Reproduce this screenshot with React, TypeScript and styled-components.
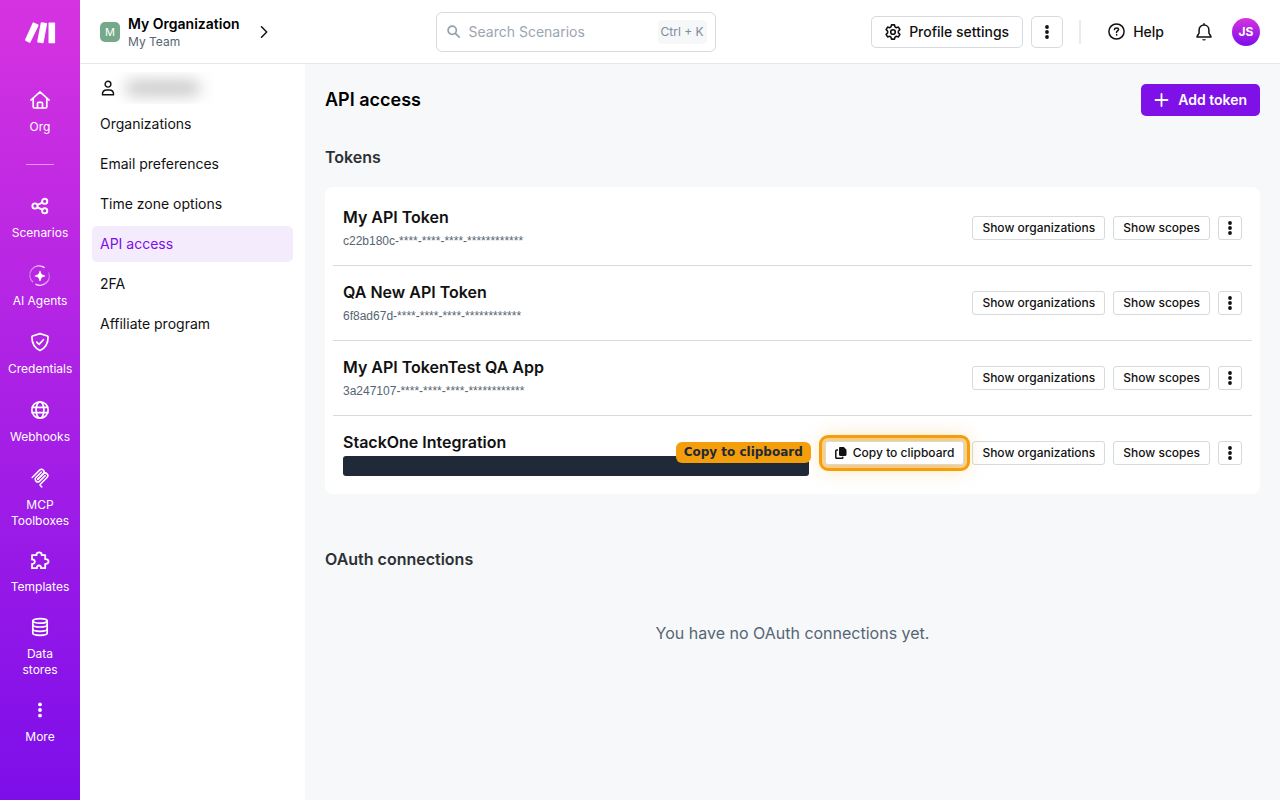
import React from 'react';
import styled, { createGlobalStyle } from 'styled-components';

const GlobalStyle = createGlobalStyle`
  *, *::before, *::after { box-sizing: border-box; }
  body {
    margin: 0;
    font-family: Inter, 'Liberation Sans', sans-serif;
    font-size: 14px;
    line-height: 20px;
    color: #111111;
    background: #f7f8fa;
  }
  button, input { font: inherit; color: inherit; }
  button { cursor: pointer; }
  a { color: inherit; text-decoration: none; }
  h1, h2, h3, p, ul { margin: 0; padding: 0; }
  ul { list-style: none; }
  svg { display: block; flex-shrink: 0; }
`;

const Shell = styled.div`
  display: flex;
  min-height: 100vh;
`;

const Rail = styled.nav`
  width: 80px;
  flex-shrink: 0;
  display: flex;
  flex-direction: column;
  align-items: center;
  padding-top: 22px;
  color: #ffffff;
  background: linear-gradient(180deg, #d633e0 0%, #7d0eea 100%);
`;

const LogoLink = styled.a`
  display: block;
  margin-bottom: 47px;
`;

const RailDivider = styled.hr`
  width: 28px;
  height: 1px;
  margin: 29px 0 32px;
  border: 0;
  background: rgba(255, 255, 255, 0.5);
`;

const RailList = styled.ul<{ $gap?: number }>`
  width: 100%;
  display: flex;
  flex-direction: column;
  gap: ${(p) => p.$gap ?? 24}px;

  & + & { margin-top: 22px; }
`;

const RailLink = styled.a`
  display: flex;
  flex-direction: column;
  align-items: center;
  gap: 10px;
  padding: 0 4px;
  font-size: 12px;
  line-height: 16px;
  text-align: center;

  svg { width: 20px; height: 18px; overflow: visible; }
`;

const RailLabel = styled.span`
  max-width: 64px;
`;

const Page = styled.div`
  flex: 1;
  min-width: 0;
  display: flex;
  flex-direction: column;
`;

const Header = styled.header`
  height: 64px;
  display: flex;
  align-items: center;
  justify-content: space-between;
  padding: 0 20px;
  background: #ffffff;
  border-bottom: 1px solid #e6e9ec;
`;

const OrgSwitch = styled.button`
  width: 180px;
  display: flex;
  align-items: center;
  gap: 8px;
  padding: 0 12px 0 0;
  border: 0;
  background: none;
  text-align: left;
`;

const OrgBadge = styled.span`
  width: 20px;
  height: 20px;
  flex-shrink: 0;
  border-radius: 5px;
  background: #76a98a;
  color: #ffffff;
  font-size: 11px;
  line-height: 20px;
  text-align: center;
`;

const OrgText = styled.span`
  flex: 1;
  display: flex;
  flex-direction: column;
  white-space: nowrap;
`;

const OrgName = styled.span`
  font-size: 14px;
  line-height: 20px;
  font-weight: 600;
  color: #000000;
`;

const TeamName = styled.span`
  font-size: 12px;
  line-height: 16px;
  color: #566573;
`;

const SearchBox = styled.label`
  width: 280px;
  height: 40px;
  display: flex;
  align-items: center;
  gap: 9px;
  padding: 0 8px 0 10px;
  border: 1px solid #d5dade;
  border-radius: 6px;
  background: #ffffff;
  color: #94a1ad;
`;

const SearchInput = styled.input`
  flex: 1;
  min-width: 0;
  padding: 0;
  border: 0;
  outline: 0;
  background: none;

  &::placeholder { color: #9aa6b1; opacity: 1; }
`;

const Shortcut = styled.kbd`
  padding: 0 3px;
  border-radius: 4px;
  background: #f5f7f9;
  color: #7d8b99;
  font-family: inherit;
  font-size: 12px;
  line-height: 24px;
`;

const HeaderActions = styled.div`
  display: flex;
  align-items: center;
`;

const OutlineButton = styled.button<{ $square?: boolean; $small?: boolean }>`
  height: ${(p) => (p.$small ? 24 : 32)}px;
  width: ${(p) => (p.$square ? (p.$small ? '24px' : '32px') : 'auto')};
  display: inline-flex;
  align-items: center;
  justify-content: center;
  gap: ${(p) => (p.$small ? 6 : 8)}px;
  padding: 0 ${(p) => (p.$square ? 0 : p.$small ? 9 : 13)}px;
  border: 1px solid #d5dade;
  border-radius: ${(p) => (p.$small ? 3 : 5)}px;
  background: #ffffff;
  color: #111111;
  font-size: ${(p) => (p.$small ? 12 : 14)}px;
  font-weight: 500;
  white-space: nowrap;
`;

const MoreButton = styled(OutlineButton)`
  margin-left: 8px;
`;

const HeaderDivider = styled.span`
  width: 2px;
  height: 24px;
  margin: 0 27px 0 16px;
  background: #e8ecef;
`;

const HelpLink = styled.a`
  display: flex;
  align-items: center;
  gap: 8px;
  font-weight: 500;
`;

const BellButton = styled.button`
  margin: 0 20px 0 32px;
  padding: 0;
  border: 0;
  background: none;
`;

const UserAvatar = styled.button`
  width: 28px;
  height: 28px;
  padding: 0;
  border: 0;
  border-radius: 50%;
  background: linear-gradient(180deg, #d633e0, #7d0eea);
  color: #ffffff;
  font-size: 12px;
  font-weight: 700;
`;

const Body = styled.div`
  flex: 1;
  display: flex;
`;

const Sidebar = styled.aside`
  width: 225px;
  flex-shrink: 0;
  padding: 8px 12px;
  background: #ffffff;
`;

const Account = styled.div`
  height: 32px;
  display: flex;
  align-items: center;
  gap: 8px;
  padding: 0 8px;
  overflow: hidden;
`;

const HiddenName = styled.span`
  width: 74px;
  height: 12px;
  margin-left: 2px;
  border-radius: 6px;
  background: #b8b8b8;
  filter: blur(8px);
`;

const Menu = styled.ul`
  display: flex;
  flex-direction: column;
  gap: 4px;
  margin-top: 2px;
`;

const MenuLink = styled.a<{ $active?: boolean }>`
  display: block;
  padding: 0 8px;
  border-radius: 5px;
  line-height: 36px;
  color: ${(p) => (p.$active ? '#7d0eea' : '#111111')};
  background: ${(p) => (p.$active ? '#f4ebfc' : 'transparent')};
`;

const Main = styled.main`
  flex: 1;
  min-width: 0;
  padding: 20px;
`;

const TitleRow = styled.div`
  display: flex;
  align-items: center;
  justify-content: space-between;
`;

const PageTitle = styled.h1`
  font-size: 18px;
  line-height: 24px;
  font-weight: 600;
  color: #000000;
`;

const PrimaryButton = styled.button`
  height: 32px;
  display: inline-flex;
  align-items: center;
  gap: 9px;
  padding: 0 13px;
  border: 0;
  border-radius: 5px;
  background: #7f11e8;
  color: #ffffff;
  font-weight: 600;
`;

const Section = styled.section`
  margin-top: 31px;

  & + & { margin-top: 55px; }
`;

const SectionTitle = styled.h2`
  font-size: 16px;
  line-height: 20px;
  font-weight: 600;
  color: #2d3136;
`;

const TokenList = styled.ul`
  margin-top: 20px;
  padding: 4px 8px;
  border-radius: 8px;
  background: #ffffff;
`;

const TokenRow = styled.li`
  box-sizing: content-box;
  min-height: 74px;
  display: flex;
  align-items: center;
  gap: 16px;
  padding: 0 10px;

  & + & { border-top: 1px solid #d6dadd; }
`;

const TokenInfo = styled.div`
  flex: 1;
  min-width: 0;
`;

const TokenName = styled.h3`
  font-size: 16px;
  line-height: 24px;
  font-weight: 600;
  margin-bottom: 2px;
`;

const TokenValue = styled.p`
  font-family: 'Liberation Sans', Arial, sans-serif;
  font-size: 12px;
  line-height: 20px;
  color: #566573;
`;

const RedactedValue = styled.div`
  height: 20px;
  border-radius: 3px;
  background: #1f2937;
`;

const TokenActions = styled.div`
  display: flex;
  gap: 8px;
`;

const Spotlight = styled.div`
  position: relative;
  display: flex;
  border-radius: 3px;
`;

const SpotlightButton = styled(OutlineButton)`
  outline: 3px solid #f59e0b;
  outline-offset: 3px;
  box-shadow: 0 0 0 4px rgba(245, 158, 11, 0.4), 0 0 20px 2px rgba(245, 158, 11, 0.4);
`;

const Callout = styled.span`
  position: absolute;
  right: calc(100% + 14px);
  top: 1px;
  padding: 0 8px;
  border-radius: 6px;
  background: #f59e0b;
  color: #1f2937;
  font-family: 'DejaVu Sans', sans-serif;
  font-size: 12px;
  line-height: 21px;
  font-weight: 700;
  white-space: nowrap;
`;

const EmptyMessage = styled.p`
  margin-top: 52px;
  font-size: 16px;
  line-height: 24px;
  text-align: center;
  color: #566573;
`;

const stroke = {
  fill: 'none',
  stroke: 'currentColor',
  strokeLinecap: 'round' as const,
  strokeLinejoin: 'round' as const,
};

const Logo = () => (
  <svg width="32" height="22" viewBox="0 0 32 22" fill="#fff" aria-hidden="true">
    <path d="M8.600.900c.2-.5.7-.7 1.200-.5l4.300 2.100c.5.3.6.7.4 1.200L6.500 20.300c-.2.5-.7.600-1.200.4L1.500 18.700c-.5-.2-.6-.7-.4-1.100z" />
    <path d="M16.700.900c.1-.5.5-.8 1-.7l4.700.9c.5.1.8.5.7 1L19.600 20.600c-.1.500-.5.800-1 .700l-4.700-.9c-.5-.1-.8-.5-.7-1z" />
    <rect x="24.500" y="0.600" width="6.600" height="20.700" rx="0.900" />
  </svg>
);

const HomeIcon = () => (
  <svg viewBox="0 0 20 18" {...stroke} strokeWidth="1.700">
    <path d="M.9 9.200 10 .800l9.100 8.400M3.200 7.600v8.200c0 .700.500 1.200 1.200 1.200h11.200c.7 0 1.200-.5 1.200-1.200V7.600" />
    <path d="M7.500 17v-4.600c0-.6.400-1 1-1h3c.6 0 1 .4 1 1V17" />
  </svg>
);

const ScenariosIcon = () => (
  <svg viewBox="0 0 20 18" {...stroke} strokeWidth="1.900">
    <circle cx="5" cy="9" r="2.600" />
    <circle cx="14.700" cy="4.300" r="2.600" />
    <circle cx="14.700" cy="13.800" r="2.600" />
    <path d="m7.500 7.800 4.700-2.200M7.500 10.300l4.700 2.300" />
  </svg>
);

const AgentsIcon = () => (
  <svg viewBox="0 -1 20 18">
    <defs>
      <linearGradient id="arcA" x1="0" y1="0" x2="1" y2="0">
        <stop offset="0" stopColor="#fff" stopOpacity="0.350" />
        <stop offset="1" stopColor="#fff" />
      </linearGradient>
      <linearGradient id="arcB" x1="0" y1="1" x2="1" y2="0">
        <stop offset="0" stopColor="#fff" />
        <stop offset="1" stopColor="#fff" stopOpacity="0.200" />
      </linearGradient>
    </defs>
    <path d="M3 16.200A9.300 9.300 0 0 1 14.500 1.600" fill="none" stroke="url(#arcA)" strokeWidth="1.300" />
    <path d="M5.500 18.100A9.300 9.300 0 0 0 18.500 6.200" fill="none" stroke="url(#arcB)" strokeWidth="1.300" />
    <path d="M10 5.300c.8 3.500 1.300 4 4.700 4.700-3.400.7-3.900 1.200-4.700 4.700-.8-3.500-1.300-4-4.700-4.700 3.400-.7 3.900-1.200 4.700-4.700z" fill="#fff" stroke="#fff" strokeWidth="1.100" strokeLinejoin="round" />
  </svg>
);

const ShieldIcon = () => (
  <svg viewBox="0 0 20 18" {...stroke} strokeWidth="1.700">
    <path d="M10 .6 17.500 3c.4.200.6.500.6.900 0 6.300-2.700 11-8.100 13.500C4.600 14.900 1.900 10.200 1.900 3.900c0-.4.200-.7.600-.9z" />
    <path d="m6.700 9.100 2.400 2.300 4.300-4.700" />
  </svg>
);

const GlobeIcon = () => (
  <svg viewBox="0 0 20 18" {...stroke} strokeWidth="1.700">
    <circle cx="10" cy="9" r="8.200" />
    <ellipse cx="10" cy="9" rx="3.900" ry="8.200" />
    <path d="M2.300 6.300h15.400M2.300 11.700h15.400" />
  </svg>
);

const McpIcon = () => (
  <svg viewBox="14 20 165 165" {...stroke} strokeWidth="14">
    <path d="M25 97.850 92.880 29.970c9.370-9.370 24.570-9.370 33.940 0 9.370 9.370 9.370 24.570 0 33.940L75.560 115.180" />
    <path d="M76.270 114.470l50.550-50.560c9.370-9.370 24.570-9.370 33.940 0l.36.350c9.370 9.370 9.370 24.570 0 33.940L99.720 159.600c-3.120 3.120-3.120 8.190 0 11.310l12.610 12.610" />
    <path d="M109.850 46.940 59.650 97.150c-9.370 9.370-9.370 24.570 0 33.940 9.370 9.370 24.570 9.370 33.940 0l50.200-50.210" />
  </svg>
);

const PuzzleIcon = () => (
  <svg viewBox="0 0 20 18" {...stroke} strokeWidth="1.800">
    <path d="M2 4.200h4.600c-.8-3.900 5.800-3.900 5 0h3.600v4c4.400-.8 4.400 5.400 0 4.600V17.200h-4.200c.7-3.600-4.700-3.600-4 0H2v-4.400c3.700.7 3.700-5 0-4.300z" />
  </svg>
);

const DatabaseIcon = () => (
  <svg viewBox="0 0 20 18" {...stroke} strokeWidth="1.700">
    <ellipse cx="10" cy="2.900" rx="7.200" ry="2.300" />
    <path d="M2.800 2.900v12.200c0 1.300 3.200 2.300 7.200 2.300s7.200-1 7.200-2.300V2.900" />
    <path d="M2.800 6.700c0 1.300 3.200 2.300 7.200 2.300s7.200-1 7.200-2.300M2.800 11c0 1.300 3.200 2.300 7.200 2.300s7.200-1 7.200-2.300" />
  </svg>
);

const RailDots = () => (
  <svg viewBox="0 0 20 18" fill="currentColor">
    <circle cx="10" cy="3.400" r="1.900" />
    <circle cx="10" cy="9" r="1.900" />
    <circle cx="10" cy="14.600" r="1.900" />
  </svg>
);

const DotsIcon = () => (
  <svg width="4" height="14" viewBox="0 0 4 14" fill="currentColor" aria-hidden="true">
    <circle cx="2" cy="2" r="1.900" />
    <circle cx="2" cy="7" r="1.900" />
    <circle cx="2" cy="12" r="1.900" />
  </svg>
);

const ChevronIcon = () => (
  <svg width="8" height="12" viewBox="0 0 8 12" {...stroke} strokeWidth="1.500">
    <path d="m1.500.800 5.200 5.200-5.200 5.200" />
  </svg>
);

const SearchIcon = () => (
  <svg width="13" height="13" viewBox="0 0 13 13" {...stroke} strokeWidth="1.700">
    <circle cx="5.200" cy="5.200" r="4.100" />
    <path d="m8.400 8.400 3.800 3.800" />
  </svg>
);

const GearIcon = () => (
  <svg width="16" height="16" viewBox="0 0 16 16" {...stroke} strokeWidth="1.600">
    <path d="M6.500.9h3l.5 2 1.400.8 2-.6 1.500 2.500L13.400 7v2l1.500 1.400-1.500 2.500-2-.6-1.400.8-.5 2h-3l-.5-2-1.400-.8-2 .6-1.500-2.500L2.600 9V7L1.100 5.600l1.500-2.500 2 .6L6 2.900z" />
    <circle cx="8" cy="8" r="2.300" />
  </svg>
);

const HelpIcon = () => (
  <svg width="17" height="17" viewBox="0 0 17 17" {...stroke} strokeWidth="1.500">
    <circle cx="8.500" cy="8.500" r="7.600" />
    <path d="M6.400 6.600c.1-1 .9-1.700 2.100-1.700s2.100.7 2.100 1.700c0 1.300-2.100 1.400-2.100 2.800" />
    <circle cx="8.500" cy="11.900" r=".35" fill="currentColor" strokeWidth="1" />
  </svg>
);

const BellIcon = () => (
  <svg width="16" height="18" viewBox="0 0 16 18" {...stroke} strokeWidth="1.500">
    <path d="M8 .800v1.200M8 2c-2.900 0-4.900 2.200-4.900 5v2.700c0 1.200-2.100 3-2.100 4.300h14c0-1.300-2.100-3.100-2.100-4.300V7c0-2.800-2-5-4.900-5z" />
    <path d="M6.200 16.200h3.600a1.800 1.300 0 0 1-3.600 0z" fill="currentColor" stroke="none" />
  </svg>
);

const UserIcon = () => (
  <svg width="16" height="16" viewBox="0 0 16 16" {...stroke} strokeWidth="1.400">
    <circle cx="8" cy="4.200" r="2.900" />
    <path d="M2.400 14.700c0-3 2-4.700 4.400-4.700h2.400c2.400 0 4.400 1.700 4.400 4.700z" />
  </svg>
);

const PlusIcon = () => (
  <svg width="15" height="14" viewBox="0 0 15 14" {...stroke} strokeWidth="1.800">
    <path d="M7.500 1v12M1.500 7h12" />
  </svg>
);

const CopyIcon = () => (
  <svg width="12" height="12" viewBox="0 0 12 12" aria-hidden="true">
    <path d="M5.200 0h3.600L11.500 2.700V7.800c0 .7-.5 1.200-1.200 1.200H5.200C4.500 9 4 8.500 4 7.800V1.200C4 .5 4.500 0 5.200 0z" fill="currentColor" />
    <path d="M3 3H1.700c-.5 0-.9.400-.9.900v6.500c0 .500.400.900.900.900h5.200c.5 0 .9-.4.9-.9V9.800" fill="none" stroke="currentColor" strokeWidth="1.500" />
  </svg>
);

type RailItem = { label: string; Icon: React.FC };

const homeItems: RailItem[] = [{ label: 'Org', Icon: HomeIcon }];

const mainItems: RailItem[] = [
  { label: 'Scenarios', Icon: ScenariosIcon },
  { label: 'AI Agents', Icon: AgentsIcon },
  { label: 'Credentials', Icon: ShieldIcon },
  { label: 'Webhooks', Icon: GlobeIcon },
  { label: 'MCP Toolboxes', Icon: McpIcon },
];

const resourceItems: RailItem[] = [
  { label: 'Templates', Icon: PuzzleIcon },
  { label: 'Data stores', Icon: DatabaseIcon },
  { label: 'More', Icon: RailDots },
];

const menuItems = [
  'Organizations',
  'Email preferences',
  'Time zone options',
  'API access',
  '2FA',
  'Affiliate program',
];

const tokens = [
  { name: 'My API Token', value: 'c22b180c-****-****-****-************' },
  { name: 'QA New API Token', value: '6f8ad67d-****-****-****-************' },
  { name: 'My API TokenTest QA App', value: '3a247107-****-****-****-************' },
  { name: 'StackOne Integration', value: null },
];

const RailGroup = ({ items, gap }: { items: RailItem[]; gap?: number }) => (
  <RailList $gap={gap}>
    {items.map(({ label, Icon }) => (
      <li key={label}>
        <RailLink href="#">
          <Icon />
          <RailLabel>{label}</RailLabel>
        </RailLink>
      </li>
    ))}
  </RailList>
);

export default function App() {
  return (
    <>
      <GlobalStyle />
      <Shell>
        <Rail aria-label="Main">
          <LogoLink href="#" aria-label="Make">
            <Logo />
          </LogoLink>
          <RailGroup items={homeItems} />
          <RailDivider />
          <RailGroup items={mainItems} />
          <RailGroup items={resourceItems} gap={23} />
        </Rail>
        <Page>
          <Header>
            <OrgSwitch>
              <OrgBadge>M</OrgBadge>
              <OrgText>
                <OrgName>My Organization</OrgName>
                <TeamName>My Team</TeamName>
              </OrgText>
              <ChevronIcon />
            </OrgSwitch>
            <SearchBox>
              <SearchIcon />
              <SearchInput type="search" placeholder="Search Scenarios" aria-label="Search Scenarios" />
              <Shortcut>Ctrl + K</Shortcut>
            </SearchBox>
            <HeaderActions>
              <OutlineButton>
                <GearIcon />
                Profile settings
              </OutlineButton>
              <MoreButton $square aria-label="More options">
                <DotsIcon />
              </MoreButton>
              <HeaderDivider />
              <HelpLink href="#">
                <HelpIcon />
                Help
              </HelpLink>
              <BellButton aria-label="Notifications">
                <BellIcon />
              </BellButton>
              <UserAvatar>JS</UserAvatar>
            </HeaderActions>
          </Header>
          <Body>
            <Sidebar>
              <Account>
                <UserIcon />
                <HiddenName />
              </Account>
              <Menu>
                {menuItems.map((item) => (
                  <li key={item}>
                    <MenuLink href="#" $active={item === 'API access'}>
                      {item}
                    </MenuLink>
                  </li>
                ))}
              </Menu>
            </Sidebar>
            <Main>
              <TitleRow>
                <PageTitle>API access</PageTitle>
                <PrimaryButton>
                  <PlusIcon />
                  Add token
                </PrimaryButton>
              </TitleRow>
              <Section>
                <SectionTitle>Tokens</SectionTitle>
                <TokenList>
                  {tokens.map((token) => (
                    <TokenRow key={token.name}>
                      <TokenInfo>
                        <TokenName>{token.name}</TokenName>
                        {token.value ? <TokenValue>{token.value}</TokenValue> : <RedactedValue />}
                      </TokenInfo>
                      <TokenActions>
                        {!token.value && (
                          <Spotlight>
                            <Callout>Copy to clipboard</Callout>
                            <SpotlightButton $small>
                              <CopyIcon />
                              Copy to clipboard
                            </SpotlightButton>
                          </Spotlight>
                        )}
                        <OutlineButton $small>Show organizations</OutlineButton>
                        <OutlineButton $small>Show scopes</OutlineButton>
                        <OutlineButton $small $square aria-label="Token options">
                          <DotsIcon />
                        </OutlineButton>
                      </TokenActions>
                    </TokenRow>
                  ))}
                </TokenList>
              </Section>
              <Section>
                <SectionTitle>OAuth connections</SectionTitle>
                <EmptyMessage>You have no OAuth connections yet.</EmptyMessage>
              </Section>
            </Main>
          </Body>
        </Page>
      </Shell>
    </>
  );
}
